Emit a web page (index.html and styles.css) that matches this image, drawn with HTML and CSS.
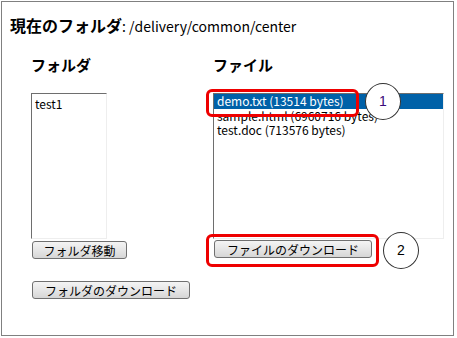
FILE: index.html
```html
<!DOCTYPE html>
<html lang="ja">
<head>
    <meta charset="UTF-8">
    <title>ファイルのダウンロード</title>
    <link rel="stylesheet" href="styles.css">
</head>
<body>

<div id="download">
    <h1 class="title">現在のフォルダ<span class="path">: /delivery/common/center</span></h1>

    <div class="columns">
        <div class="col_left">
            <h2 class="heading">フォルダ</h2>
            <ul class="listbox folder_list">
                <li>test1</li>
            </ul>
            <button type="button" class="btn btn_move">フォルダ移動</button>
            <button type="button" class="btn btn_wide btn_folder">フォルダのダウンロード</button>
        </div>

        <div class="col_right">
            <h2 class="heading">ファイル</h2>
            <ul class="listbox file_list">
                <li class="selected">demo.txt (13514 bytes)</li>
                <li>sample.html (6960716 bytes)</li>
                <li>test.doc (713576 bytes)</li>
            </ul>
            <button type="button" class="btn btn_wide btn_file">ファイルのダウンロード</button>
        </div>
    </div>

    <!-- annotations -->
    <div class="mark mark_one"></div>
    <div class="num num_one">1</div>
    <div class="mark mark_two"></div>
    <div class="num num_two">2</div>
</div>

</body>
</html>
```

FILE: styles.css
```css
body{
    margin: 0;
    background: #ffffff;
    font-family: "Noto Sans CJK JP", "DejaVu Sans", sans-serif;
    color: #000000;
}
ul{
    margin: 0;
    padding: 0;
}
li{
    list-style: none;
}
#download{
    position: relative;
    box-sizing: border-box;
    width: 453px;
    height: 335px;
    margin: 1px;
    border: 1px solid #808080;
}
#download .title{
    margin: 0;
    padding: 12px 0 0 8px;
    font-size: 16px;
    line-height: 22px;
    font-weight: bold;
}
#download .title .path{
    font-size: 14px;
    font-weight: normal;
}
.columns{
    display: flex;
    padding-left: 29px;
}
.col_left{
    width: 182px;
}
.col_right{
    width: 232px;
}
.heading{
    margin: 0;
    padding-top: 18px;
    height: 38px;
    font-size: 15px;
    line-height: 20px;
    font-weight: bold;
}
.listbox{
    box-sizing: border-box;
    height: 146px;
    padding: 1px 0 0 0;
    border: 1px solid;
    border-color: #6e6e6e #eeeeee #eeeeee #6e6e6e;
    font-size: 12px;
    line-height: 14px;
}
.listbox li{
    padding-left: 3px;
    white-space: nowrap;
}
.folder_list{
    width: 76px;
    padding-top: 3px;
}
.file_list{
    width: 231px;
    padding-top: 0;
}
.file_list .selected{
    height: 15px;
    background: #0061a8;
    color: #ffffff;
}
.btn{
    display: block;
    box-sizing: border-box;
    height: 18px;
    padding: 0;
    border: 1px solid #707070;
    border-radius: 3px;
    background: linear-gradient(#f4f4f4, #e6e6e6 50%, #d6d6d6);
    font-family: "Noto Sans CJK JP", sans-serif;
    font-size: 12px;
    line-height: 15px;
    color: #000000;
}
.btn_move{
    width: 95px;
    margin: 2px 0 0 1px;
}
.btn_wide{
    width: 158px;
}
.btn_folder{
    margin: 22px 0 0 1px;
}
.btn_file{
    margin: 1px 0 0 1px;
}
.mark{
    position: absolute;
    box-sizing: border-box;
    border: 3px solid #ee0000;
    border-radius: 6px;
}
.mark_one{
    left: 204px;
    top: 87px;
    width: 153px;
    height: 28px;
}
.mark_two{
    left: 204px;
    top: 232px;
    width: 173px;
    height: 33px;
}
.num{
    position: absolute;
    box-sizing: border-box;
    width: 36px;
    height: 37px;
    border: 1px solid #333333;
    border-radius: 50%;
    background: #ffffff;
    font-family: "Liberation Sans", sans-serif;
    font-size: 14px;
    line-height: 35px;
    text-align: center;
}
.num_one{
    left: 363px;
    top: 81px;
    color: #3a0a7a;
}
.num_two{
    left: 381px;
    top: 230px;
}
```
